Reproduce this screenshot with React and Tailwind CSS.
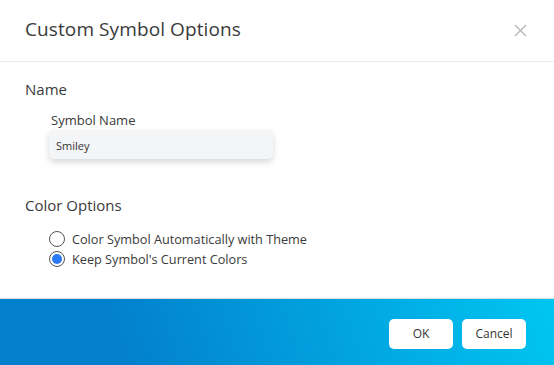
import React, { useState } from 'react';

export default function App() {
  const [colorMode, setColorMode] = useState('keep');

  return (
    <div className="w-[554px] h-[365px] bg-white flex flex-col font-['Open_Sans',sans-serif] text-[#333]">
      {/* header */}
      <div className="h-[62px] flex items-center justify-between pl-[25px] pr-[27px] border-b border-[#e9e9e9]">
        <h1 className="text-[19px] text-[#3a3a3a] tracking-[0.1px] pb-[2px]">Custom Symbol Options</h1>
        <button className="text-[#bdbdbd] pb-[1px]">
          <svg width="13" height="13" viewBox="0 0 13 13" fill="none" stroke="currentColor" strokeWidth="1.6">
            <path d="M1 1L12 12M12 1L1 12" />
          </svg>
        </button>
      </div>

      {/* body */}
      <div className="flex-1 pl-[25px] pt-[17px] border-b border-[#dcdcdc]">
        <h2 className="text-[15px] leading-[20px] text-[#3a3a3a]">Name</h2>
        <div className="pl-[26px] pt-[12px]">
          <label className="block text-[13px] leading-[18px] text-[#3a3a3a]">Symbol Name</label>
          <input
            defaultValue="Smiley"
            className="mt-[1px] -ml-[2px] w-[224px] h-[29px] rounded-[5px] bg-[#f4f5f7] px-[7px] pt-[2px] text-[11px] text-[#333] shadow-[0_3px_6px_rgba(0,0,0,0.16)] outline-none"
          />
        </div>

        <h2 className="mt-[36px] text-[15px] leading-[20px] text-[#3a3a3a]">Color Options</h2>
        <div className="pl-[24px] pt-[15px] flex flex-col gap-[2px]">
          {[
            ['auto', 'Color Symbol Automatically with Theme'],
            ['keep', "Keep Symbol's Current Colors"],
          ].map(([value, label]) => (
            <label key={value} className="flex items-center gap-[7px] text-[12.7px] leading-[18px] text-[#3a3a3a] cursor-pointer">
              <span className="w-[16px] h-[16px] rounded-full border border-[#555] flex items-center justify-center bg-white">
                {colorMode === value && <span className="w-[10px] h-[10px] rounded-full bg-[#2a78f5]" />}
              </span>
              <input
                type="radio"
                name="colorMode"
                className="hidden"
                checked={colorMode === value}
                onChange={() => setColorMode(value)}
              />
              {label}
            </label>
          ))}
        </div>
      </div>

      {/* footer */}
      <div className="h-[66px] flex items-center justify-end gap-[9px] pr-[28px] pt-[4px] bg-[linear-gradient(70deg,#0380cc_0%,#0380cc_22%,#00c6f2_100%)]">
        <button className="w-[64px] h-[30px] rounded-[5px] bg-white text-[12px] text-[#333]">OK</button>
        <button className="w-[64px] h-[30px] rounded-[5px] bg-white text-[12px] text-[#333]">Cancel</button>
      </div>
    </div>
  );
}
